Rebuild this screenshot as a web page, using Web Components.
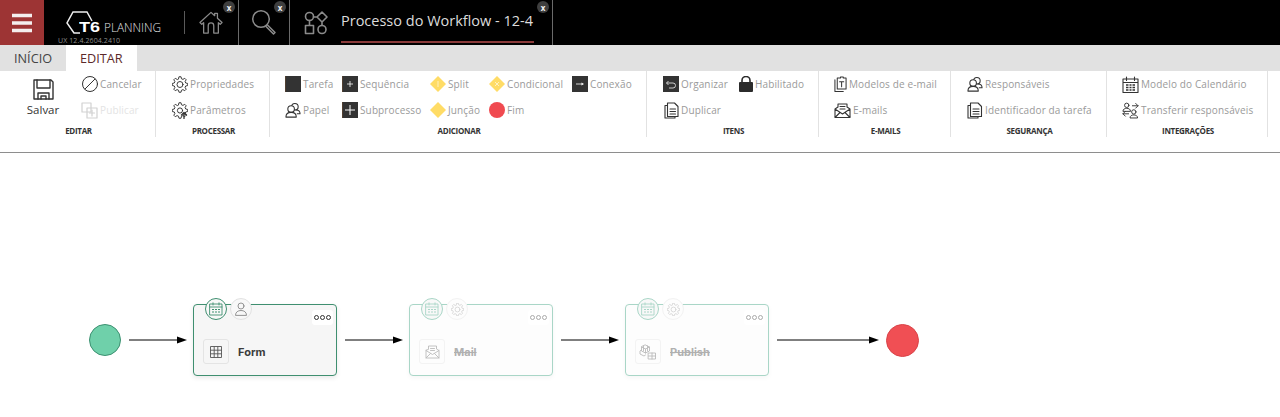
<!DOCTYPE html>
<html lang="pt"><head><meta charset="utf-8"><title>Processo do Workflow</title>
<style>
html,body{margin:0;padding:0;background:#fff;height:417px;overflow:hidden;font-family:"Open Sans",sans-serif}
</style></head><body>
<wf-app></wf-app>
<script>
const S='fill="none" stroke="currentColor" stroke-linecap="round" stroke-linejoin="round"';
function gearPath(c,ro,ri,n){let p=[];for(let k=0;k<n;k++){const s=2*Math.PI/n,t=k*s-Math.PI/2,w=s*.17;
 const pts=[[ri,t-s*.33],[ro,t-w],[ro,t+w],[ri,t+s*.33]];
 pts.forEach(([r,x])=>p.push((c+r*Math.cos(x)).toFixed(2)+' '+(c+r*Math.sin(x)).toFixed(2)));}
 return 'M'+p.join('L')+'z';}
const G=gearPath(8,7.8,5.9,8);
const ICONS={
menu:`<svg width="20" height="20" viewBox="0 0 20 20"><path d="M0 2.500h20M0 10h20M0 17.500h20" stroke="#f4eeee" stroke-width="3.400"/></svg>`,
home:`<svg width="24" height="23" viewBox="0 0 26 25" ${S} stroke-width="1.400"><path d="M1 12.500 13 1.500l4 3.600V2.500h3v5.300l5 4.700-2 2-2-1.800V24h-5v-8a3 3 0 0 0-6 0v8H5V12.700L3 14.500z"/></svg>`,
search:`<svg width="26" height="26" viewBox="0 0 26 26" ${S} stroke-width="1.500"><circle cx="10" cy="10" r="8.300"/><path d="m16.500 16 7.500 7.500-1.500 1.500-7.500-7.500"/></svg>`,
flow:`<svg width="24" height="24" viewBox="0 0 24 24" ${S} stroke-width="1.600"><circle cx="5.500" cy="5.500" r="4"/><path d="m18 1 5 5-5 5-5-5zM9.500 6H13M1.500 14.500h8v8h-8zM5.500 9.500v5M18 11v3"/><circle cx="18" cy="18.500" r="4"/></svg>`,
save:`<svg width="21" height="21" viewBox="0 0 21 21" ${S} stroke-width="1.400"><path d="M1 1h17l2 2v17H1z"/><path d="M4 1v8h13V1M5 20v-6h11v6M8 20v-3h5v3"/></svg>`,
cancel:`<svg width="16" height="16" viewBox="0 0 16 16" ${S} stroke-width="1"><circle cx="8" cy="8" r="7.500"/><path d="M3 13 13 3"/></svg>`,
publish:`<svg width="17" height="17" viewBox="0 0 17 17" ${S} stroke-width="1.200" style="opacity:.22"><path d="M1 1h9v9H1zM6 6h10v10H6z"/><path d="M11 8v6M8.500 11h5"/></svg>`,
gear:`<svg width="17" height="17" viewBox="0 0 16 16" ${S} stroke-width=".95"><path d="${G}"/><circle cx="8" cy="8" r="3"/></svg>`,
gearup:`<svg width="17" height="17" viewBox="0 0 16 16" ${S} stroke-width=".95"><path d="${G}"/><circle cx="8" cy="8" r="2.600"/><path d="M12 16v-6h0M9.500 12.500 12 10l2.500 2.500" stroke-width="1.300"/></svg>`,
user:`<svg width="17" height="17" viewBox="0 0 17 17" ${S} stroke-width="1.150"><circle cx="10.500" cy="4.500" r="3.500"/><circle cx="6.500" cy="7" r="3.500" fill="#fff"/><path d="M1 15.500c0-3.500 2.500-5 5.500-5s5.500 1.500 5.500 5zM11.500 8c2.500 0 4.500 1.500 4.500 4h-3"/></svg>`,
task:`<svg width="16" height="16" viewBox="0 0 16 16"><rect width="16" height="16" fill="#333"/><path d="M0 0v16" stroke="#8a5a30" stroke-width=".7"/></svg>`,
seq:`<svg width="16" height="16" viewBox="0 0 16 16"><rect width="16" height="16" fill="#333"/><path d="M0 0v16" stroke="#8a5a30" stroke-width=".7"/><path d="M8 5v6M5 8h6" stroke="#fff" stroke-width=".8"/></svg>`,
sub:`<svg width="16" height="16" viewBox="0 0 16 16"><rect width="16" height="16" fill="#333"/><path d="M0 0v16" stroke="#8a5a30" stroke-width=".7"/><path d="M8 3v10M3 8h10" stroke="#fff" stroke-width="1"/></svg>`,
conn:`<svg width="16" height="16" viewBox="0 0 16 16"><rect width="16" height="16" fill="#333"/><path d="M4 8h6" stroke="#fff" stroke-width=".8"/><path d="m9.500 6.500 2.500 1.500-2.500 1.500z" fill="#fff"/></svg>`,
org:`<svg width="16" height="16" viewBox="0 0 16 16"><rect width="16" height="16" fill="#333"/><path d="M3.500 7H10a2.500 2.500 0 0 1 0 5H6M5.500 5 3.500 7l2 2" fill="none" stroke="#ddd" stroke-width=".9"/></svg>`,
lock:`<svg width="14" height="16" viewBox="0 0 14 16"><path d="M3 7V4.500a4 4 0 0 1 8 0V7" fill="none" stroke="#2b2b2b" stroke-width="1.600"/><rect y="6" width="14" height="10" rx="1" fill="#2b2b2b"/></svg>`,
dsplit:`<svg width="16" height="16" viewBox="0 0 16 16"><path d="m8 0 8 8-8 8-8-8z" fill="#ffdc66"/><path d="M8 5v6" stroke="#fff" stroke-width=".6"/></svg>`,
dcond:`<svg width="16" height="16" viewBox="0 0 16 16"><path d="m8 0 8 8-8 8-8-8z" fill="#ffdc66"/><path d="m6 6 4 4m0-4-4 4" stroke="#fff" stroke-width=".6"/></svg>`,
djoin:`<svg width="16" height="16" viewBox="0 0 16 16"><path d="m8 0 8 8-8 8-8-8z" fill="#ffdc66"/></svg>`,
end:`<svg width="16" height="16" viewBox="0 0 16 16"><circle cx="8" cy="8" r="8" fill="#f04a50"/></svg>`,
doc:`<svg width="13" height="16" viewBox="0 0 14 17" ${S} stroke-width="1.100"><path d="M1 4v12.500h9"/><path d="M3.500 2h3.500V1h3v1h3v12h-9.500z"/><path d="M6 6h4.500M8.200 6v5.500"/></svg>`,
dup:`<svg width="15" height="17" viewBox="0 0 15 17" ${S} stroke-width="1.100"><path d="M3.500 3.500H1v12.500h10v-1.500"/><path d="M3.500 1h7l3.500 3.500v10h-10.500zM6 7h5.500M6 9.500h5.500M6 12h5.500"/></svg>`,
mail:`<svg width="17" height="15" viewBox="0 0 17 15" ${S} stroke-width="1.100"><path d="M1 6v8.500h15V6L13 4V1H4v3zM1 6l7.500 5L16 6M1 14.500 6 9.500M16 14.500l-5-5M6 3.500h5M6 6h5"/></svg>`,
docs:`<svg width="16" height="17" viewBox="0 0 16 17" ${S} stroke-width="1.100"><path d="M3.500 3.500H1v12.500h10v-1.500"/><path d="M3.500 1h7.500l3.500 3.500v10h-11zM6 7h6M6 9.500h6M6 12h6"/></svg>`,
cal:`<svg width="17" height="17" viewBox="0 0 17 17" ${S} stroke-width="1.100"><path d="M1 3h15v13.500H1zM1 6.500h15M4.500 1v3.500M12.500 1v3.500"/><path d="M4 9h2.500M7.500 9h2M10.500 9h2.500M4 11.500h2.500M7.500 11.500h2M10.500 11.500h2.500M4 14h2.500M7.500 14h2M10.500 14h2.500" stroke-width="1.400" stroke-linecap="butt"/></svg>`,
transfer:`<svg width="17" height="17" viewBox="0 0 18 17" ${S} stroke-width="1"><circle cx="5" cy="3" r="2.300"/><path d="M1 9c0-2 2-2.800 4-2.800S9 7 9 9zM11 3.500h6M14.500 1 17 3.500 14.500 6"/><circle cx="12.500" cy="10" r="2.300"/><path d="M8.500 16c0-2 2-2.800 4-2.800s4 .8 4 2.800zM7 12H1M3.500 9.500 1 12l2.500 2.500"/></svg>`,
ncal:`<svg width="14" height="14" viewBox="0 0 14 14" ${S} stroke-width=".9"><path d="M1 2h12v11H1zM1 5h12M4 .8V3M10 .8V3"/><path d="M3 7.500h2M6 7.500h2M9 7.500h2M3 10h2M6 10h2M9 10h2" stroke-width="1.200" stroke-linecap="butt"/></svg>`,
nuser:`<svg width="14" height="14" viewBox="0 0 14 14" ${S} stroke-width=".9"><circle cx="7" cy="4" r="3"/><path d="M1.500 13c0-3 2.500-4.500 5.500-4.500s5.500 1.500 5.500 4.500z"/></svg>`,
ngear:`<svg width="13" height="13" viewBox="0 0 16 16" ${S} stroke-width="1.100"><path d="${G}"/><circle cx="8" cy="8" r="3"/></svg>`,
grid:`<svg width="14" height="14" viewBox="0 0 14 14" ${S} stroke-width=".9"><path d="M1.500 1.500h11v11h-11zM1.500 5.200h11M1.500 8.800h11M5.200 1.500v11M8.800 1.500v11" stroke-linecap="butt"/></svg>`,
nmail:`<svg width="15" height="14" viewBox="0 0 15 14" ${S} stroke-width=".9"><path d="M1 5.500V13h13V5.500L11.500 4V1h-8v3zM1 5.500 7.500 9.500 14 5.500M1 13l4.500-4.500M14 13 9.500 8.500M5.500 3.500h4M5.500 5.500h4"/></svg>`,
npub:`<svg width="18" height="16" viewBox="0 0 18 16" ${S} stroke-width=".9"><path d="m6.500 1 4 2v4l-4 2-4-2V3zM2.500 3l4 2 4-2M6.500 5v4M4.500 2v5M8.500 2v5M2 6l-1 1v3l4 2 1.500-1"/><path d="M9.500 9h7v6h-7zM9.500 12h7M13 9v6"/></svg>`
};
function def(name,css,html){customElements.define(name,class extends HTMLElement{
  constructor(){super();this.attachShadow({mode:'open'})}
  connectedCallback(){const a=n=>this.getAttribute(n)||'';this.shadowRoot.innerHTML=`<style>${css}</style>`+html(a,ICONS)}
})}
def('close-badge',`:host{display:flex;width:12px;height:12px;border-radius:50%;background:#3f3f3f;color:#f2f2f2;font:700 8px/11px "Open Sans",sans-serif;align-items:center;justify-content:center;position:absolute;top:1px;right:3px}`,()=>`x`);
def('top-tab',`:host{display:flex;position:relative;box-sizing:border-box;height:45px;align-items:flex-start;border-right:1px solid #6a6a6a;color:#8b8b8b}
 svg{display:block}.i{display:block}`,(a,I)=>`<span class="i" style="margin:${a('m')}">${I[a('icon')]}</span><slot></slot><close-badge></close-badge>`);
def('t6-logo',`:host{display:grid;width:126px;height:45px;margin-left:14px;color:#fff;grid-template:1fr/1fr;flex:none}
 svg,.t,.v{grid-area:1/1}
 svg{margin:11px 0 0 8px}
 .t{display:flex;align-items:baseline;padding:21px 0 0 21px;height:11px}
 b{display:block;font:700 15px/11px "Liberation Sans",sans-serif;width:19px;transform:scaleX(1.2);transform-origin:left}
 span{font:300 11.800px/11px "Open Sans",sans-serif;margin-left:6px;color:#e4e4e4}
 .v{font:400 7px/8px "Open Sans",sans-serif;color:#8d8d8d;padding-top:37px;letter-spacing:.1px}`,
 ()=>`<svg width="30" height="24" viewBox="0 0 30 24" fill="none" stroke="#eee" stroke-width="1.500"><path d="M26 10 21 1H7L1 12l7 10h6"/></svg><div class="t"><b>T6</b><span>PLANNING</span></div><div class="v">UX 12.4.2604.2410</div>`);
def('wf-topbar',`:host{display:flex;height:45px;background:#000;flex:none}
 .menu{width:44px;height:45px;background:#9d3434;display:flex;align-items:center;justify-content:center;flex:none}
 .sep{width:1px;height:23px;background:#5a5a5a;margin:11px 0 0 0;flex:none}
 .title{font:400 14.500px/20px "Open Sans",sans-serif;color:#dcdcdc;margin:11px 0 0 13px;height:34px;width:193px;white-space:nowrap}
 .u{height:2px;background:#8a3a3a;margin-top:10px;width:193px}
 svg{display:block}`,(a,I)=>`<div class="menu">${I.menu}</div><t6-logo></t6-logo><div class="sep"></div>
 <top-tab icon="home" m="11px 0 0 14px" style="width:54px"></top-tab>
 <top-tab icon="search" m="9px 0 0 12px" style="width:51px"></top-tab>
 <top-tab icon="flow" m="11px 0 0 14px" style="width:263px"><div class="title">Processo do Workflow - 12-4<div class="u"></div></div></top-tab>`);
def('wf-tabs',`:host{display:flex;height:26px;background:#e1e1e1;flex:none;font:400 12.700px/26px "Open Sans",sans-serif;color:#444}
 div{padding:0 0 0 14px;width:52px}.on{background:#fff;color:#5c2a2a;width:57px}`,
 ()=>`<div>INÍCIO</div><div class="on">EDITAR</div>`);
def('rb-group',`:host{display:grid;box-sizing:border-box;border-right:1px solid #e2e2e2;height:66px;grid-template-rows:53px 13px;flex:none}
 .c{display:grid;grid-template-rows:26px 26px;grid-auto-flow:column;justify-content:start}
 .l{font:700 8px/13px "Open Sans",sans-serif;color:#333;text-align:center;letter-spacing:-.3px;padding-left:2px}`,
 a=>`<div class="c" style="padding-left:${a('pl')}px;grid-template-columns:${a('cols')}"><slot></slot></div><div class="l">${a('label')}</div>`);
def('rb-item',`:host{display:flex;align-items:center;gap:2px;font:400 10px/14px "Open Sans",sans-serif;color:#9a9a9a;letter-spacing:.13px;white-space:nowrap;height:26px}
 .i{display:flex;width:var(--w,16px);justify-content:center;color:#333;flex:none}svg{display:block}
 :host([off]){color:#e4e4e4}`,(a,I)=>`<span class="i" style="--w:${a('w')||16}px">${I[a('icon')]}</span><slot></slot>`);
def('rb-save',`:host{display:flex;flex-direction:column;align-items:center;grid-row:1/3;font:400 11.500px/14px "Open Sans",sans-serif;color:#333;padding-top:8px;width:32px}svg{display:block}span{height:21px;margin-bottom:3px}`,
 (a,I)=>`<span>${I.save}</span><slot></slot>`);
def('wf-ribbon',`:host{display:flex;height:82px;box-sizing:border-box;border-bottom:1px solid #8e8e8e;flex:none}`,()=>`<slot></slot>`);
def('wf-event',`:host{display:block;box-sizing:border-box;width:var(--d);height:var(--d);border-radius:50%;flex:none;background:var(--f);border:1px solid var(--b)}`,()=>``);
def('wf-arrow',`:host{display:block;flex:none;height:10px}svg{display:block}`,a=>{const w=+a('w');return `<svg width="${w}" height="10" viewBox="0 0 ${w} 10"><path d="M0 5h${w-8}" stroke="#000" stroke-width="1"/><path d="M${w-10} 1.500 ${w} 5l-10 3.500z" fill="#000"/></svg>`});
def('wf-node',`:host{display:block;position:relative;box-sizing:border-box;width:144px;height:72px;flex:none;border:1px solid #3f8f70;border-radius:4px;background:#f6f6f6;box-shadow:0 2px 5px rgba(0,0,0,.09)}
 :host([off]){border-color:#a9d6c7;background:#fdfdfd;box-shadow:0 2px 5px rgba(0,0,0,.04)}
 svg{display:block}
 .b{position:absolute;border-radius:50%;display:flex;align-items:center;justify-content:center;box-sizing:border-box;background:#f8f8f8;width:22px;height:22px;top:-7px}
 .b1{left:11px;border:1.300px solid #3f8f70;color:#3f8f70}
 .b2{left:36px;border:1px solid #e2e2e2;color:#888}
 :host([off]) .b1{border-color:#a9d6c7;color:#a9d6c7}:host([off]) .b2{border-color:#f2f2f2;color:#d5d5d5;background:#fdfdfd}
 .d{position:absolute;right:3px;top:5px;background:#fff;border-radius:3px;display:flex;gap:1px;padding:5px 2px}
 .d i{width:3px;height:3px;border:1px solid #333;border-radius:50%;display:block}
 :host([off]) .d i{border-color:#aaa}
 .r{display:flex;align-items:center;gap:9px;padding:34px 0 0 9px}
 .ic{box-sizing:border-box;width:26px;height:25px;border:1px solid #e4e4e4;border-radius:3px;display:flex;align-items:center;justify-content:center;color:#555;background:#f6f6f6}
 :host([off]) .ic{border-color:#f3f3f3;color:#bbb;background:#fdfdfd}
 .n{font:700 11px/14px "Inter","Open Sans",sans-serif;color:#3c3c3c}
 :host([off]) .n{color:#b0b0b0;text-decoration:line-through}`,
 (a,I)=>`<span class="b b1">${I.ncal}</span><span class="b b2">${I[a('b')]}</span><span class="d"><i></i><i></i><i></i></span><div class="r"><span class="ic">${I[a('icon')]}</span><span class="n">${a('name')}</span></div>`);
def('wf-canvas',`:host{display:block;flex:1;box-sizing:border-box;padding:151px 0 0 89px}
 .row{display:flex;align-items:center}`,()=>`<div class="row">
 <wf-event style="--d:32px;--f:#6fd0aa;--b:#3d9071"></wf-event>
 <wf-arrow w="58" style="margin:0 6px 0 8px"></wf-arrow>
 <wf-node name="Form" icon="grid" b="nuser"></wf-node>
 <wf-arrow w="58" style="margin:0 6px 0 8px"></wf-arrow>
 <wf-node off name="Mail" icon="nmail" b="ngear"></wf-node>
 <wf-arrow w="58" style="margin:0 6px 0 8px"></wf-arrow>
 <wf-node off name="Publish" icon="npub" b="ngear"></wf-node>
 <wf-arrow w="102" style="margin:0 7px 0 8px"></wf-arrow>
 <wf-event style="--d:33px;--f:#f04f54;--b:#d94348"></wf-event></div>`);
def('wf-app',`:host{display:flex;flex-direction:column;width:1280px;height:417px;overflow:hidden}`,()=>`
 <wf-topbar></wf-topbar><wf-tabs></wf-tabs>
 <wf-ribbon>
  <rb-group label="EDITAR" pl="27" cols="54px auto" style="width:156px"><rb-save>Salvar</rb-save><rb-item icon="cancel" w="17">Cancelar</rb-item><rb-item off icon="publish" w="17">Publicar</rb-item></rb-group>
  <rb-group label="PROCESSAR" pl="16" cols="auto" style="width:114px"><rb-item icon="gear">Propriedades</rb-item><rb-item icon="gearup">Parâmetros</rb-item></rb-group>
  <rb-group label="ADICIONAR" pl="15" cols="57px 88px 59px 83px auto" style="width:377px"><rb-item icon="task">Tarefa</rb-item><rb-item icon="user">Papel</rb-item><rb-item icon="seq">Sequência</rb-item><rb-item icon="sub">Subprocesso</rb-item><rb-item icon="dsplit">Split</rb-item><rb-item icon="djoin">Junção</rb-item><rb-item icon="dcond">Condicional</rb-item><rb-item icon="end">Fim</rb-item><rb-item icon="conn">Conexão</rb-item></rb-group>
  <rb-group label="ITENS" pl="16" cols="75px auto" style="width:172px"><rb-item icon="org">Organizar</rb-item><rb-item icon="dup">Duplicar</rb-item><rb-item icon="lock" w="15">Habilitado</rb-item></rb-group>
  <rb-group label="E-MAILS" pl="15" cols="auto" style="width:132px"><rb-item icon="doc" w="13">Modelos de e-mail</rb-item><rb-item icon="mail" w="17">E-mails</rb-item></rb-group>
  <rb-group label="SEGURANÇA" pl="16" cols="auto" style="width:156px"><rb-item icon="user">Responsáveis</rb-item><rb-item icon="docs">Identificador da tarefa</rb-item></rb-group>
  <rb-group label="INTEGRAÇÕES" pl="15" cols="auto" style="width:161px"><rb-item icon="cal" w="17">Modelo do Calendário</rb-item><rb-item icon="transfer" w="17">Transferir responsáveis</rb-item></rb-group>
 </wf-ribbon>
 <wf-canvas></wf-canvas>`);
</script>
</body></html>
